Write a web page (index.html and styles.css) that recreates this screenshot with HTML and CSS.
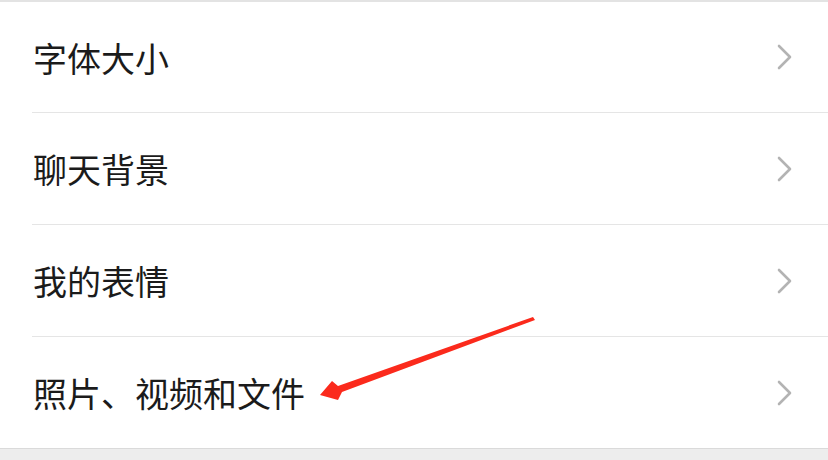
FILE: index.html
```html
<!DOCTYPE html>
<html lang="zh-CN">
<head>
  <meta charset="UTF-8">
  <title>设置</title>
  <link rel="stylesheet" href="styles.css">
</head>
<body>
  <div class="page">
    <ul class="menu">
      <li class="row">
        <span class="label">字体大小</span>
        <svg class="chevron" width="16" height="26" viewBox="0 0 16 26"><polyline points="2,2 13,13 2,24" /></svg>
      </li>
      <li class="row">
        <span class="label">聊天背景</span>
        <svg class="chevron" width="16" height="26" viewBox="0 0 16 26"><polyline points="2,2 13,13 2,24" /></svg>
      </li>
      <li class="row">
        <span class="label">我的表情</span>
        <svg class="chevron" width="16" height="26" viewBox="0 0 16 26"><polyline points="2,2 13,13 2,24" /></svg>
      </li>
      <li class="row">
        <span class="label">照片、视频和文件</span>
        <svg class="chevron" width="16" height="26" viewBox="0 0 16 26"><polyline points="2,2 13,13 2,24" /></svg>
      </li>
    </ul>
    <div class="footer"></div>

    <!-- annotation arrow drawn over the list -->
    <svg class="arrow" width="828" height="460" viewBox="0 0 828 460">
      <polygon points="320,395 332,381 338,386 533,317 535,320 342,392 338,400" />
    </svg>
  </div>
</body>
</html>
```

FILE: styles.css
```css
* {
  box-sizing: border-box;
}

body {
  margin: 0;
  font-family: "Noto Sans CJK SC", "Noto Sans", sans-serif;
  background: #ffffff;
}

.page {
  position: relative;
  width: 828px;
  height: 460px;
  overflow: hidden;
  background: #ededed;
}

.menu {
  list-style: none;
  margin: 0;
  padding: 0 0 0 32px;
  background: #ffffff;
  border-top: 2px solid #e3e3e3;
  border-bottom: 1px solid #dadada;
}

.row {
  display: flex;
  align-items: center;
  justify-content: space-between;
  height: 112px;
  padding-right: 35px;
  border-top: 1px solid #e5e5e5;
}

.row:first-child {
  height: 110px;
  border-top: none;
}

.label {
  font-size: 34px;
  color: #1b1b1b;
  padding-left: 1px;
}

.chevron polyline {
  fill: none;
  stroke: #b3b3b3;
  stroke-width: 2.6;
  stroke-linecap: round;
  stroke-linejoin: round;
}

.footer {
  height: 12px;
}

.arrow {
  position: absolute;
  left: 0;
  top: 0;
  pointer-events: none;
}

.arrow polygon {
  fill: #fb2a1c;
}
```
